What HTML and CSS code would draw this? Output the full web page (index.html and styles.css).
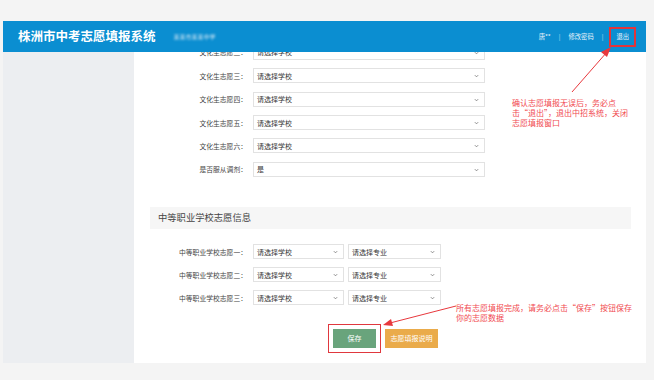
FILE: index.html
```html
<!doctype html>
<html>
<head>
<meta charset="utf-8">
<title>株洲市中考志愿填报系统</title>
<link rel="stylesheet" href="styles.css">
</head>
<body>
<div class="frame">
	<header class="header">
		<h1 class="title">株洲市中考志愿填报系统</h1>
		<span class="org">某某市某某中学</span>
		<ul class="user">
			<li>唐**</li>
			<li class="sep">|</li>
			<li>修改密码</li>
			<li class="sep">|</li>
			<li class="logout">退出</li>
		</ul>
	</header>
	<div class="body">
		<aside class="side"></aside>
		<main class="main">
			<div class="rows">
				<div class="row"><label>文化生志愿二：</label><div class="sel wide">请选择学校<svg viewBox="0 0 6 4"><path d="M1 1l2 2 2-2"/></svg></div></div>
				<div class="row"><label>文化生志愿三：</label><div class="sel wide">请选择学校<svg viewBox="0 0 6 4"><path d="M1 1l2 2 2-2"/></svg></div></div>
				<div class="row"><label>文化生志愿四：</label><div class="sel wide">请选择学校<svg viewBox="0 0 6 4"><path d="M1 1l2 2 2-2"/></svg></div></div>
				<div class="row"><label>文化生志愿五：</label><div class="sel wide">请选择学校<svg viewBox="0 0 6 4"><path d="M1 1l2 2 2-2"/></svg></div></div>
				<div class="row"><label>文化生志愿六：</label><div class="sel wide">请选择学校<svg viewBox="0 0 6 4"><path d="M1 1l2 2 2-2"/></svg></div></div>
				<div class="row"><label>是否服从调剂：</label><div class="sel wide">是<svg viewBox="0 0 6 4"><path d="M1 1l2 2 2-2"/></svg></div></div>
			</div>
			<h2 class="sec-title">中等职业学校志愿信息</h2>
			<div class="rows vrows">
				<div class="row"><label>中等职业学校志愿一：</label><div class="sel v-school">请选择学校<svg viewBox="0 0 6 4"><path d="M1 1l2 2 2-2"/></svg></div><div class="sel v-major">请选择专业<svg viewBox="0 0 6 4"><path d="M1 1l2 2 2-2"/></svg></div></div>
				<div class="row"><label>中等职业学校志愿二：</label><div class="sel v-school">请选择学校<svg viewBox="0 0 6 4"><path d="M1 1l2 2 2-2"/></svg></div><div class="sel v-major">请选择专业<svg viewBox="0 0 6 4"><path d="M1 1l2 2 2-2"/></svg></div></div>
				<div class="row"><label>中等职业学校志愿三：</label><div class="sel v-school">请选择学校<svg viewBox="0 0 6 4"><path d="M1 1l2 2 2-2"/></svg></div><div class="sel v-major">请选择专业<svg viewBox="0 0 6 4"><path d="M1 1l2 2 2-2"/></svg></div></div>
			</div>
			<div class="btns">
				<span class="btn save">保存</span>
				<span class="btn help">志愿填报说明</span>
			</div>
		</main>
	</div>

	<p class="note note1">确认志愿填报无误后，务必点<br>击“退出”，退出中招系统，关闭<br>志愿填报窗口</p>
	<p class="note note2">所有志愿填报完成，请务必点击“保存”按钮保存<br>你的志愿数据</p>
	<svg class="arrows" width="643" height="342" viewBox="0 0 643 342">
		<line x1="569" y1="71" x2="604" y2="31"/>
		<polygon points="608,26 598,31 604,36"/>
		<line x1="453" y1="285" x2="387" y2="302"/>
		<polygon points="380,304 388,298 390,305"/>
	</svg>
</div>
</body>
</html>
```

FILE: styles.css
```css
body,h1,h2,p,ul,li{margin:0;padding:0;}
li{ list-style:none;}
body{ background:#f4f4f4; font-family:"Noto Sans CJK SC","Noto Sans",sans-serif; color:#333;}

.frame{ position:relative; width:643px; margin:21px 0 0 3px;}

.header{ height:31px; background:#0b8ed1; display:flex; align-items:center; padding:0 10px 0 15px; color:#fff;}
.title{ font-size:12.5px; font-weight:bold; letter-spacing:0; line-height:1;}
.org{ margin-left:18px; font-size:6px; color:#cfe6f5; filter:blur(1px);}
.user{ margin-left:auto; display:flex; align-items:center; font-size:6.3px; color:#e8f3fb;}
.user li{ margin-left:6px;}
.user .sep{ margin-left:8px; margin-right:2px; color:#bfe0f3;}
.user .logout{ margin-left:4px; padding:3px 5px; height:10px; line-height:10px; border:2px solid #e3343a;}

.body{ display:flex; height:311px;}
.side{ width:131px; background:#eceef1;}
.main{ flex:1; background:#fff; overflow:hidden; padding:0 15px 0 0;}

.rows{ display:flex; flex-direction:column; gap:8.4px; margin-top:-7.1px;}
.row{ display:flex; align-items:center; height:15px;}
.row label{ width:113px; text-align:right; font-size:6.8px; color:#444; white-space:nowrap;}
.sel{ height:15px; box-sizing:border-box; border:1px solid #e2e2e2; margin-left:6px; display:flex; align-items:center; padding-left:3px; font-size:7px; color:#333; position:relative;}
.sel svg{ position:absolute; right:5px; top:5px; width:5px; height:4px; fill:none; stroke:#777; stroke-width:1;}
.wide{ width:232px;}
.v-school{ width:91px;}
.v-major{ width:93px; margin-left:4px;}

.sec-title{ margin:30.5px 0 0 16px; height:21.7px; background:#f6f6f6; font-size:9.3px; font-weight:normal; color:#444; line-height:21.7px; padding-left:8px;}

.vrows{ margin-top:15px; gap:8px;}

.btns{ display:flex; margin:24px 0 0 199px; gap:9px;}
.btn{ height:18.5px; line-height:18.5px; text-align:center; font-size:7px; color:#fff;}
.save{ width:43px; background:#69a47c; outline:1.5px solid #e0383e; outline-offset:4px;}
.help{ width:53px; background:#eaab4a;}

.note{ position:absolute; font-size:8px; line-height:10px; color:#f14a50; white-space:nowrap;}
.note1{ left:509px; top:77px;}
.note2{ left:453px; top:282px;}

.arrows{ position:absolute; left:0; top:0; pointer-events:none;}
.arrows line{ stroke:#e8383d; stroke-width:1;}
.arrows polygon{ fill:#e8383d;}
```
